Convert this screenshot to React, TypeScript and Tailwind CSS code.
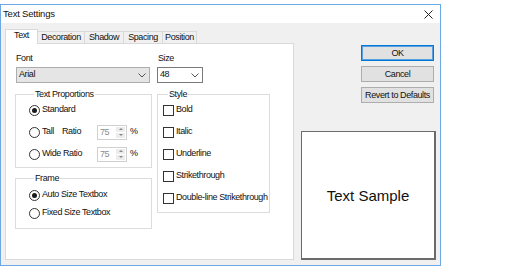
import React from 'react'

const font = "font-['Liberation_Sans',Arial,sans-serif]"

const Chevron = () => (
    <svg width="8" height="5" viewBox="0 0 8 5" className="shrink-0">
        <polyline points="0.5,0.5 4,4 7.5,0.5" fill="none" stroke="#555" strokeWidth="1" />
    </svg>
)

const Radio = ({ checked }: { checked?: boolean }) => (
    <span className="w-[11px] h-[11px] rounded-full border border-[#333] bg-white flex items-center justify-center shrink-0">
        {checked && <span className="w-[5px] h-[5px] rounded-full bg-[#1a1a1a]" />}
    </span>
)

const Check = () => <span className="w-[11px] h-[11px] border border-[#333] bg-white shrink-0" />

const Spinner = ({ value }: { value: string }) => (
    <div className="w-[30px] h-[15px] border border-[#d0d0d0] bg-white flex">
        <span className="flex-1 pl-[2px] leading-[13px] text-[#8c8c8c]">{value}</span>
        <div className="w-[10px] flex flex-col py-px pr-px gap-px">
            <div className="flex-1 bg-[#ececec] flex items-center justify-center">
                <span className="w-0 h-0 border-x-[2px] border-x-transparent border-b-[2px] border-b-[#8a8a8a]" />
            </div>
            <div className="flex-1 bg-[#ececec] flex items-center justify-center">
                <span className="w-0 h-0 border-x-[2px] border-x-transparent border-t-[2px] border-t-[#8a8a8a]" />
            </div>
        </div>
    </div>
)

const tabs = [
    { label: 'Decoration', w: 'w-[47px]' },
    { label: 'Shadow', w: 'w-[39px]' },
    { label: 'Spacing', w: 'w-[39px]' },
    { label: 'Position', w: 'w-[34px]' },
]

const styles = ['Bold', 'Italic', 'Underline', 'Strikethrough', 'Double-line Strikethrough']

export default function App() {
    return (
        <div className={`w-[531px] h-[270px] bg-white pt-[4px] ${font} text-[9px] tracking-[-0.4px] text-[#111]`}>
            <div className="w-[441px] h-[262px] border border-[#6aa9e4] bg-[#f0f0f0] flex flex-col">
                {/* title bar */}
                <div className="h-[18px] bg-white flex items-center justify-between pl-[2px] pr-[7px]">
                    <span className="text-[9.5px] tracking-[-0.2px]">Text Settings</span>
                    <svg width="9" height="9" viewBox="0 0 9 9">
                        <path d="M0.5 0.5 L8.5 8.5 M8.5 0.5 L0.5 8.5" stroke="#222" strokeWidth="1" />
                    </svg>
                </div>

                <div className="flex pl-[4px] pt-[6px]">
                    {/* tab control */}
                    <div className="flex flex-col">
                        <div className="flex items-end h-[14px]">
                            <div className="w-[33px] h-[15px] -mb-px relative z-10 bg-white border border-b-0 border-[#d9d9d9] flex items-center justify-center pb-[2px]">
                                Text
                            </div>
                            {tabs.map(t => (
                                <div
                                    key={t.label}
                                    className={`${t.w} h-[12px] border-t border-r border-[#d9d9d9] bg-[#f0f0f0] flex items-center justify-center`}
                                >
                                    {t.label}
                                </div>
                            ))}
                        </div>
                        <div className="w-[289px] h-[217px] border border-[#d9d9d9] bg-white flex gap-[5px] pl-[9px] pt-[8px]">
                            {/* left column */}
                            <div className="w-[137px] flex flex-col">
                                <span className="ml-px leading-[13px]">Font</span>
                                <div className="ml-px mt-[2px] w-[134px] h-[16px] bg-[#e5e5e5] border border-[#adadad] flex items-center justify-between pl-[2px] pr-[3px]">
                                    <span>Arial</span>
                                    <Chevron />
                                </div>

                                <fieldset className="mt-[5px] w-[137px] border border-[#dcdcdc] pl-[13px] pt-px pb-[5px]">
                                    <legend className="ml-[5px] px-px leading-[13px]">Text Proportions</legend>
                                    <div className="flex flex-col gap-[6px]">
                                        <div className="h-[16px] flex items-center gap-[2px]">
                                            <Radio checked />
                                            <span>Standard</span>
                                        </div>
                                        <div className="h-[16px] flex items-center">
                                            <Radio />
                                            <span className="ml-[2px] w-[20px]">Tall</span>
                                            <span className="w-[35px]">Ratio</span>
                                            <Spinner value="75" />
                                            <span className="ml-[3px]">%</span>
                                        </div>
                                        <div className="h-[16px] flex items-center">
                                            <Radio />
                                            <span className="ml-[2px] w-[21px]">Wide</span>
                                            <span className="w-[34px]">Ratio</span>
                                            <Spinner value="75" />
                                            <span className="ml-[3px]">%</span>
                                        </div>
                                    </div>
                                </fieldset>

                                <fieldset className="mt-[4px] w-[137px] border border-[#dcdcdc] pl-[13px] pt-[2px] pb-[7px]">
                                    <legend className="ml-[5px] px-px leading-[13px]">Frame</legend>
                                    <div className="flex flex-col gap-[2px]">
                                        <div className="h-[16px] flex items-center gap-[2px]">
                                            <Radio checked />
                                            <span>Auto Size Textbox</span>
                                        </div>
                                        <div className="h-[16px] flex items-center gap-[2px]">
                                            <Radio />
                                            <span>Fixed Size Textbox</span>
                                        </div>
                                    </div>
                                </fieldset>
                            </div>

                            {/* right column */}
                            <div className="w-[113px] flex flex-col">
                                <span className="ml-px leading-[13px]">Size</span>
                                <div className="mt-[2px] w-[46px] h-[16px] bg-white border border-[#7a7a7a] flex items-center justify-between pl-[2px] pr-[3px]">
                                    <span>48</span>
                                    <Chevron />
                                </div>
                                <fieldset className="mt-[5px] w-[113px] border border-[#dcdcdc] pl-[5px] pt-px pb-[6px]">
                                    <legend className="ml-[5px] px-px leading-[13px]">Style</legend>
                                    <div className="flex flex-col gap-[6px]">
                                        {styles.map(s => (
                                            <div key={s} className="h-[16px] flex items-center gap-[2px]">
                                                <Check />
                                                <span>{s}</span>
                                            </div>
                                        ))}
                                    </div>
                                </fieldset>
                            </div>
                        </div>
                    </div>

                    {/* buttons + preview */}
                    <div className="ml-[7px] w-[134px] flex flex-col">
                        <div className="self-end mr-px mt-[16px] flex flex-col gap-[5px]">
                            <button className="w-[73px] h-[16px] bg-[#e1e1e1] border border-[#0078d7] shadow-[inset_0_0_0_1px_#5aa0e0] leading-none">
                                OK
                            </button>
                            <button className="w-[73px] h-[16px] bg-[#e1e1e1] border border-[#adadad] leading-none">
                                Cancel
                            </button>
                            <button className="w-[73px] h-[16px] bg-[#e1e1e1] border border-[#adadad] leading-none">
                                Revert to Defaults
                            </button>
                        </div>
                        <div className="mt-[28px] w-[135px] h-[129px] bg-white border border-r-2 border-b-2 border-[#6b6b6b] flex items-center justify-center pt-[3px]">
                            <span className="text-[15px] tracking-normal text-[#111]">Text Sample</span>
                        </div>
                    </div>
                </div>
            </div>
        </div>
    )
}
